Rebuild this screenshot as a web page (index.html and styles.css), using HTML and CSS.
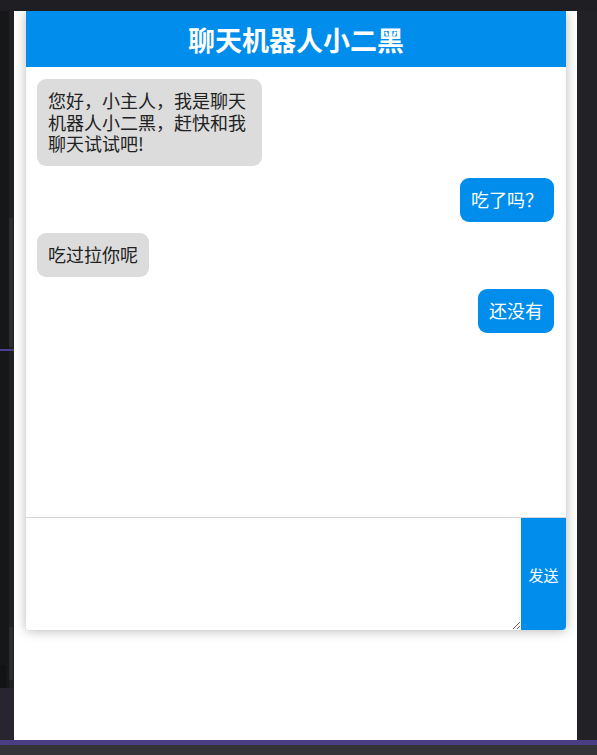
FILE: index.html
```html
<!DOCTYPE html>
<html lang="zh-CN">
<head>
<meta charset="utf-8">
<title>聊天机器人小二黑</title>
<link rel="stylesheet" href="styles.css">
</head>
<body>
<div class="screen">
  <div class="topstrip"></div>
  <aside class="gutter">
    <div class="gutter-dark">
      <div class="gutter-dark-top"></div>
      <div class="gutter-dark-notch"></div>
    </div>
    <div class="gutter-track">
      <div class="thumb thumb-a"></div>
      <div class="thumb thumb-b"></div>
    </div>
    <div class="gutter-line"></div>
    <div class="gutter-bottom"></div>
  </aside>
  <main class="panel">
    <section class="chat">
      <header class="chat-header">聊天机器人小二黑</header>
      <div class="messages">
        <div class="bubble bubble-bot">您好，小主人，我是聊天机器人小二黑，赶快和我聊天试试吧!</div>
        <div class="bubble bubble-me">吃了吗？</div>
        <div class="bubble bubble-bot">吃过拉你呢</div>
        <div class="bubble bubble-me">还没有</div>
      </div>
      <div class="composer">
        <textarea class="composer-input"></textarea>
        <button class="composer-send" type="button">发送</button>
      </div>
    </section>
  </main>
  <div class="rightstrip"></div>
  <div class="statusline"></div>
  <div class="statusbar"></div>
</div>
</body>
</html>
```
FILE: styles.css
```css
* { box-sizing: border-box; }

html, body {
  margin: 0;
  padding: 0;
  background: #1f1f23;
  height: 100%;
}

.screen {
  width: 597px;
  height: 755px;
  display: grid;
  grid-template-columns: 14px 563px 20px;
  grid-template-rows: 11px 729px 5px 10px;
  overflow: hidden;
}

.topstrip {
  grid-column: 1 / 4;
  grid-row: 1;
  background: #1f1e23;
}

.gutter {
  grid-column: 1;
  grid-row: 2;
  position: relative;
  display: grid;
  grid-template-columns: 9px 5px;
  grid-template-rows: 677px 52px;
}

.gutter-dark {
  grid-column: 1;
  grid-row: 1;
  background: #161718;
  display: flex;
  flex-direction: column;
  justify-content: flex-end;
}
.gutter-dark-notch {
  height: 23px;
  width: 6px;
  background: #121314;
}

.gutter-track {
  grid-column: 2;
  grid-row: 1;
  background: #202025;
  position: relative;
}
.thumb {
  position: absolute;
  left: 0;
  width: 4px;
  background: #2c2c31;
}
.thumb-a { top: 207px; height: 129px; }
.thumb-b { top: 616px; height: 53px; }

.gutter-line {
  position: absolute;
  left: 0;
  right: 0;
  top: 338px;
  height: 2px;
  background: #4e3f96;
}

.gutter-bottom {
  grid-column: 1 / 3;
  grid-row: 2;
  background: #28252f;
}

.rightstrip {
  grid-column: 3;
  grid-row: 2;
  background: #222226;
}

.statusline {
  grid-column: 1 / 4;
  grid-row: 3;
  background: #4b3d84;
}

.statusbar {
  grid-column: 1 / 4;
  grid-row: 4;
  background: #343338;
}

.panel {
  grid-column: 2;
  grid-row: 2;
  background: #ffffff;
  overflow: hidden;
  padding: 0 11px 0 12px;
}

.chat {
  width: 540px;
  height: 619px;
  display: flex;
  flex-direction: column;
  background: #ffffff;
  border-radius: 0 0 4px 4px;
  box-shadow: 0 1px 12px rgba(0, 0, 0, 0.28);
  overflow: hidden;
  font-family: "Noto Sans CJK SC", "Noto Sans", sans-serif;
}

.chat-header {
  height: 56px;
  flex: none;
  background: #008dec;
  color: #ffffff;
  font-size: 27px;
  font-weight: 700;
  text-align: center;
  line-height: 58px;
}

.messages {
  height: 451px;
  flex: none;
  border-bottom: 1px solid #d6d6d6;
  padding: 11.5px 12px 0 11px;
  display: flex;
  flex-direction: column;
  align-items: flex-start;
  gap: 11.25px;
}

.bubble {
  max-width: 225px;
  padding: 11.25px 11px;
  font-size: 18px;
  line-height: 21.75px;
  border-radius: 9px;
}

.bubble-bot {
  align-self: flex-start;
  background: #dcdcdc;
  color: #222222;
}

.bubble-me {
  align-self: flex-end;
  background: #008dec;
  color: #ffffff;
}

.composer {
  flex: 1;
  display: flex;
}

.composer-input {
  flex: 1;
  border: none;
  outline: none;
  margin: 0;
  padding: 2px;
  resize: both;
  background: #ffffff;
  font-family: "Noto Sans CJK SC", sans-serif;
}

.composer-send {
  width: 45px;
  flex: none;
  border: none;
  margin: 0;
  padding: 0;
  background: #008dec;
  color: #ffffff;
  font-family: "Noto Sans CJK SC", sans-serif;
  font-size: 15px;
}
```
